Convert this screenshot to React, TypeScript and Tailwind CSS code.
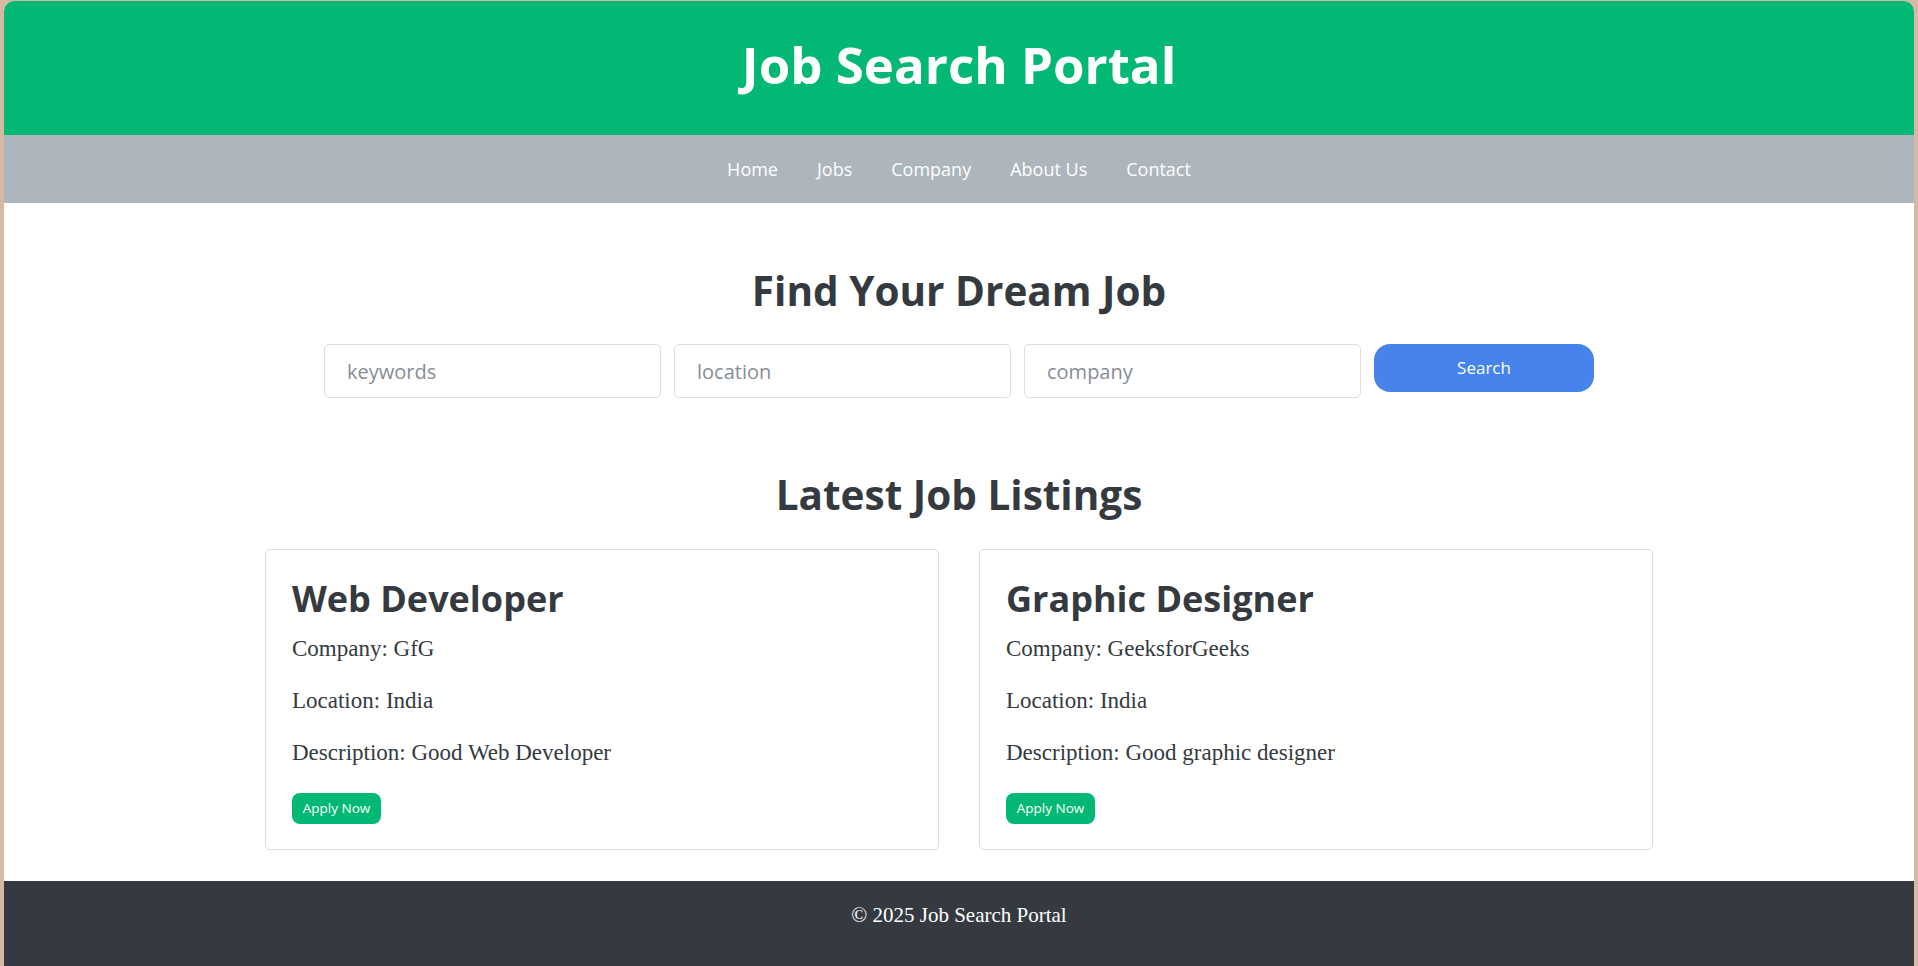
import React from 'react';

const SANS = "font-['Open_Sans','Noto_Sans',sans-serif]";
const SERIF = "font-['Liberation_Serif','DejaVu_Serif',serif]";

const JOBS = [
  { title: 'Web Developer', company: 'GfG', location: 'India', description: 'Good Web Developer' },
  { title: 'Graphic Designer', company: 'GeeksforGeeks', location: 'India', description: 'Good graphic designer' },
];

const NAV = ['Home', 'Jobs', 'Company', 'About Us', 'Contact'];

function JobCard({ job }: { job: (typeof JOBS)[number] }) {
  return (
    <div className="w-[674px] rounded-[5px] border border-[#dcdcdc] bg-white px-[26px] pt-[25px] pb-[25px]">
      <h3 className={`${SANS} text-[36px] font-bold leading-[48px] text-[#343a40]`}>{job.title}</h3>
      <div className={`${SERIF} mt-[10px] flex flex-col gap-[20px] text-[23px] leading-[32px] text-[#343a40]`}>
        <p>Company: {job.company}</p>
        <p>Location: {job.location}</p>
        <p>Description: {job.description}</p>
      </div>
      <button className={`${SANS} mt-[24px] h-[31px] w-[89px] rounded-[8px] bg-[#03b875] text-[13.5px] text-white`}>
        Apply Now
      </button>
    </div>
  );
}

export default function App() {
  return (
    <div className="min-h-screen bg-[#d6b9a2] px-[4px] pt-[1px]">
      <div className="flex min-h-[965px] flex-col overflow-hidden rounded-t-[10px] bg-white">
        <header className="flex h-[134px] items-center justify-center bg-[#03b875] pb-[7px]">
          <h1 className={`${SANS} text-[51px] font-bold text-white`}>Job Search Portal</h1>
        </header>

        <nav className="flex h-[68px] items-center justify-center gap-[39px] bg-[#adb5bd]">
          {NAV.map((item) => (
            <a key={item} href="#" className={`${SANS} text-[18px] text-white`}>
              {item}
            </a>
          ))}
        </nav>

        <main className="flex flex-col items-center pt-[64px] pb-[31px]">
          <h2 className={`${SANS} text-[40.5px] font-bold leading-[48px] text-[#343a40]`}>Find Your Dream Job</h2>

          <div className="mt-[29px] flex items-start gap-[13px]">
            {['keywords', 'location', 'company'].map((ph) => (
              <input
                key={ph}
                placeholder={ph}
                className={`${SANS} h-[54px] w-[337px] rounded-[5px] border border-[#dedede] px-[22px] text-[20px] text-[#343a40] outline-none placeholder:text-[#868e96]`}
              />
            ))}
            <button className={`${SANS} h-[48px] w-[220px] rounded-[16px] bg-[#4683ea] text-[17px] text-white`}>
              Search
            </button>
          </div>

          <h2 className={`${SANS} mt-[73px] text-[40.5px] font-bold leading-[48px] text-[#343a40]`}>Latest Job Listings</h2>

          <div className="mt-[30px] flex gap-[40px]">
            {JOBS.map((job) => (
              <JobCard key={job.title} job={job} />
            ))}
          </div>
        </main>

        <footer className="flex flex-1 items-start justify-center bg-[#353a41] pt-[20px]">
          <p className={`${SERIF} text-[21px] leading-[28px] text-white`}>© 2025 Job Search Portal</p>
        </footer>
      </div>
    </div>
  );
}
